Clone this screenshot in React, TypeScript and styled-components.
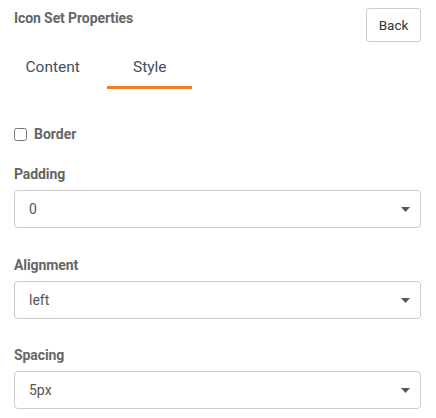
import React, { useState } from "react";
import styled, { createGlobalStyle } from "styled-components";

const Global = createGlobalStyle`
  html, body { margin: 0; padding: 0; background: #fff; }
  body { font-family: Roboto, "Liberation Sans", Arial, sans-serif; }
  * { box-sizing: border-box; }
`;

const Page = styled.div`
  width: 436px;
  padding: 8px 15px 0 14px;
`;

const Header = styled.div`
  display: flex;
  justify-content: space-between;
  align-items: flex-start;
  height: 34px;
`;

const Title = styled.h2`
  margin: 2px 0 0;
  font-size: 14px;
  line-height: 16px;
  font-weight: 700;
  color: #666;
  letter-spacing: -0.1px;
`;

const BackButton = styled.button`
  width: 55px;
  height: 34px;
  border: 1px solid #ccc;
  border-radius: 3px;
  background: #fff;
  color: #333;
  font-family: inherit;
  font-size: 13.5px;
  padding: 0;
  cursor: pointer;
`;

const Tabs = styled.div`
  display: flex;
  gap: 2px;
  margin: 6px 0 0 -14px;
`;

const Tab = styled.button<{ $active?: boolean }>`
  border: none;
  background: none;
  font-family: inherit;
  font-size: 15.5px;
  line-height: 18px;
  color: #44505c;
  padding: 10px 25.5px 10px;
  border-bottom: 3px solid ${(p) => (p.$active ? "#f07d24" : "transparent")};
  cursor: pointer;
`;

const CheckRow = styled.label`
  display: flex;
  align-items: center;
  gap: 7px;
  margin-top: 37px;
  height: 16px;
  font-size: 14px;
  font-weight: 700;
  color: #666;
`;

const Check = styled.input`
  margin: 0;
  width: 13px;
  height: 13px;
`;

const Group = styled.div`
  margin-top: 24px;
  & + & {
    margin-top: 28.5px;
  }
`;

const Label = styled.div`
  font-size: 14px;
  line-height: 16px;
  font-weight: 700;
  color: #666;
  letter-spacing: -0.1px;
  margin-bottom: 8px;
`;

const SelectWrap = styled.div`
  position: relative;
  width: 407px;
  height: 38px;
`;

const Select = styled.select`
  appearance: none;
  -webkit-appearance: none;
  width: 100%;
  height: 100%;
  border: 1px solid #ccc;
  border-radius: 4px;
  background: #fff;
  padding: 0 30px 0 14px;
  font-family: inherit;
  font-size: 14px;
  color: #555;
  outline: none;
`;

const Caret = styled.svg`
  position: absolute;
  right: 11px;
  top: 50%;
  margin-top: -2px;
  width: 9px;
  height: 5px;
  pointer-events: none;
`;

const Field: React.FC<{ label: string; value: string; options: string[] }> = ({ label, value, options }) => {
  const [v, setV] = useState(value);
  return (
    <Group>
      <Label>{label}</Label>
      <SelectWrap>
        <Select value={v} onChange={(e) => setV(e.target.value)}>
          {options.map((o) => (
            <option key={o} value={o}>{o}</option>
          ))}
        </Select>
        <Caret viewBox="0 0 9 5">
          <path d="M0 0 L9 0 L4.5 5 Z" fill="#555" />
        </Caret>
      </SelectWrap>
    </Group>
  );
};

export default function App() {
  const [tab, setTab] = useState("Style");
  return (
    <Page>
      <Global />
      <Header>
        <Title>Icon Set Properties</Title>
        <BackButton>Back</BackButton>
      </Header>
      <Tabs>
        {["Content", "Style"].map((t) => (
          <Tab key={t} $active={tab === t} onClick={() => setTab(t)}>{t}</Tab>
        ))}
      </Tabs>
      <CheckRow>
        <Check type="checkbox" />
        Border
      </CheckRow>
      <Field label="Padding" value="0" options={["0", "5px", "10px", "15px"]} />
      <Field label="Alignment" value="left" options={["left", "center", "right"]} />
      <Field label="Spacing" value="5px" options={["0", "5px", "10px", "15px"]} />
    </Page>
  );
}
